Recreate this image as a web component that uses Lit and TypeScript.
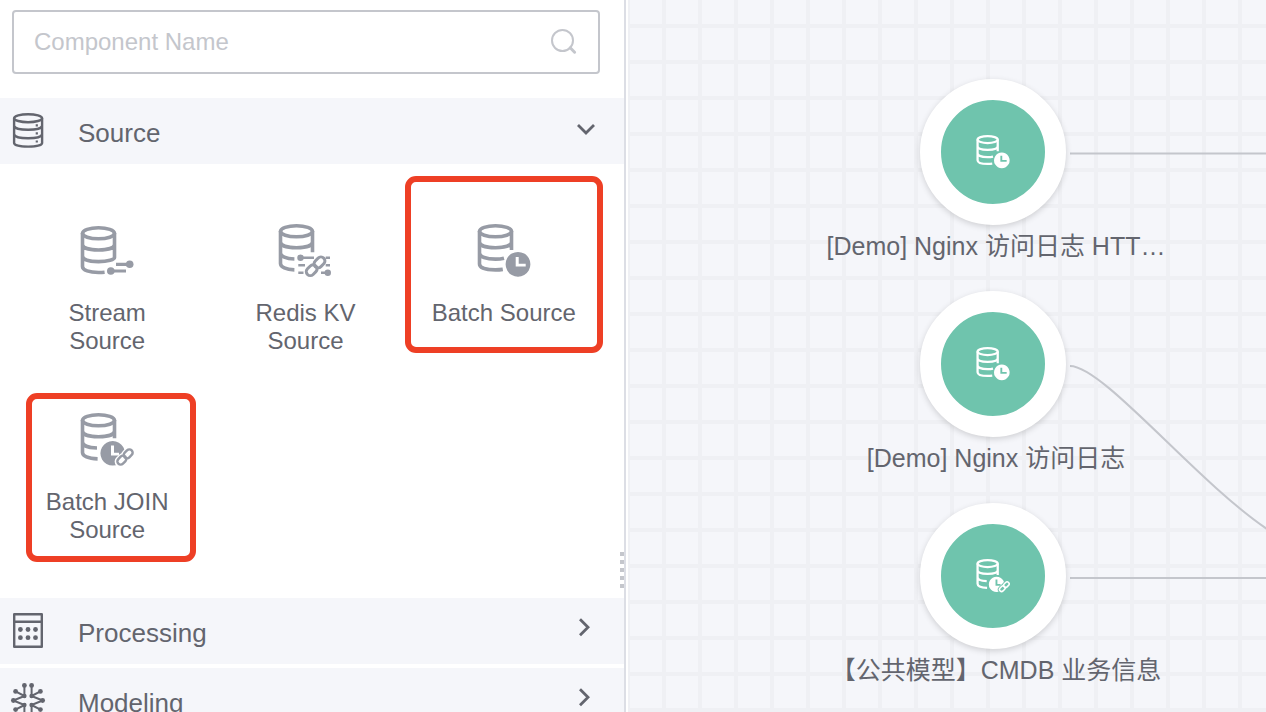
import { LitElement, html, css, svg } from "lit";
import { customElement, property } from "lit/decorators.js";

type Mark = "stream" | "redis" | "batch" | "join";

interface Component {
  name: string;
  mark: Mark;
  frame?: string;
}

interface FlowNode {
  label: string;
  mark: Mark;
  slot: string;
}

const COMPONENTS: Component[] = [
  { name: "Stream Source", mark: "stream" },
  { name: "Redis KV Source", mark: "redis" },
  { name: "Batch Source", mark: "batch", frame: "frame-cell" },
  { name: "Batch JOIN Source", mark: "join", frame: "frame-tight" },
];

const NODES: FlowNode[] = [
  { label: "[Demo] Nginx 访问日志 HTT…", mark: "batch", slot: "n1" },
  { label: "[Demo] Nginx 访问日志", mark: "batch", slot: "n2" },
  { label: "【公共模型】CMDB 业务信息", mark: "join", slot: "n3" },
];

// Two interlocked links, centred on the origin.
const chain = svg`
  <g fill="none" stroke="currentColor" stroke-width="3">
    <rect x="-4" y="-6" width="8" height="12" rx="4" transform="translate(3.9 -3.9) rotate(45)"/>
    <rect x="-4" y="-6" width="8" height="12" rx="4" transform="translate(-3.9 3.9) rotate(45)"/>
  </g>`;

@customElement("db-icon")
export class DbIcon extends LitElement {
  @property() mark: Mark = "batch";

  static styles = css`
    :host { display: block; }
    svg { display: block; width: 100%; height: 100%; }
  `;

  render() {
    return html`<svg viewBox="0 0 54 54" aria-hidden="true">${this.art()}</svg>`;
  }

  private art() {
    switch (this.mark) {
      case "stream":
        return svg`
          <g fill="none" stroke="currentColor" stroke-width="3.6">
            <ellipse cx="18.5" cy="9.3" rx="16" ry="5.5"/>
            <path d="M2.5 9V42.5C2.5 46.3 9.5 48.5 18.5 48.5Q22 48.5 24.6 48.2M34.5 9V33.5C34.5 35.5 28 37.6 18.5 37.6S2.5 35.5 2.5 32M2.5 20.5C2.5 24 9.5 26 18.5 26S34.5 24 34.5 20.5"/>
            <path d="M36 40.3H50M31 47H46" stroke-width="3.2"/>
          </g>
          <circle cx="49.7" cy="40.3" r="3.8" fill="currentColor"/>
          <circle cx="30.8" cy="47" r="3.8" fill="currentColor"/>`;
      case "redis":
        return svg`
          <g fill="none" stroke="currentColor" stroke-width="3.6">
            <ellipse cx="18.5" cy="7.3" rx="16" ry="5.5"/>
            <path d="M2.5 7V39.5C2.5 43 8 45.7 16.4 45.9M34.5 7V28.3M2.5 18C2.5 21.7 9.5 23.7 18.5 23.7S34.5 21.7 34.5 18M2.5 29C2.5 32.3 8 34.8 16.4 35"/>
          </g>
          <g fill="none" stroke="currentColor" stroke-width="2.6">
            <path d="M23 33.7H36M47.7 33.7H52M20.3 41.3H27M47.7 41.3H52M20.3 48.7H25.5M43 48.7H50"/>
          </g>
          <circle cx="22.5" cy="33.7" r="3.2" fill="currentColor"/>
          <circle cx="49.8" cy="48.7" r="3.2" fill="currentColor"/>
          <g transform="translate(37.6 42.3)">${chain}</g>`;
      case "join":
        return svg`
          <mask id="gap">
            <rect width="54" height="54" fill="#fff"/>
            <g transform="translate(45 44)" fill="#000" stroke="#000" stroke-width="5.5">
              <rect x="-3" y="-5" width="6" height="10" rx="3" transform="translate(3.2 -3.2) rotate(45)"/>
              <rect x="-3" y="-5" width="6" height="10" rx="3" transform="translate(-3.2 3.2) rotate(45)"/>
            </g>
          </mask>
          <g fill="none" stroke="currentColor" stroke-width="3.6">
            <ellipse cx="18.5" cy="7.3" rx="16" ry="5.5"/>
            <path d="M2.5 7V39.5C2.5 43 8 45.7 17.6 45.9M34.5 7V25.3M2.5 18C2.5 21.7 9.5 23.7 18.5 23.7S34.5 21.7 34.5 18M2.5 29C2.5 32.3 8 34.8 17 35"/>
          </g>
          <path mask="url(#gap)" fill="currentColor" fill-rule="evenodd" d="M32.7 28a12.3 12.3 0 1 0 .01 0ZM31 32.5H34V39.8H39V42.6H31Z"/>
          <g transform="translate(45 44) scale(.82)">${chain}</g>`;
      default:
        return svg`
          <g fill="none" stroke="currentColor" stroke-width="3.6">
            <ellipse cx="18.5" cy="7.3" rx="16" ry="5.5"/>
            <path d="M2.5 7V40C2.5 43.8 9.5 45.9 18.5 45.9Q22.5 45.9 25.8 45.4M34.5 7V26M2.5 18C2.5 21.7 9.5 23.7 18.5 23.7S34.5 21.7 34.5 18M2.5 29C2.5 32.8 9.5 35.1 18.5 35.1Q23.5 35.1 27 34.2"/>
          </g>
          <path fill="currentColor" fill-rule="evenodd" d="M41 27.9a12.4 12.4 0 1 0 .01 0ZM38.7 33H41.7V39.7H48.7V42.5H38.7Z"/>`;
    }
  }
}

@customElement("app-root")
export class AppRoot extends LitElement {
  static styles = css`
    :host {
      display: flex;
      height: 100vh;
      overflow: hidden;
      background: #fff;
      color: #63656e;
      font-family: "Liberation Sans", "Noto Sans CJK SC", sans-serif;
      font-size: 24px;
      line-height: 28px;
    }
    * { box-sizing: border-box; }
    .panel {
      position: relative;
      flex: 0 0 626px;
      border-right: 2px solid #dcdee5;
      overflow: hidden;
    }
    .search {
      display: flex;
      align-items: center;
      height: 64px;
      margin: 10px 24px 24px 12px;
      padding: 0 20px;
      border: 2px solid #c4c6cc;
      border-radius: 4px;
    }
    .search input {
      flex: 1;
      min-width: 0;
      padding: 0;
      border: 0;
      outline: 0;
      background: none;
      color: inherit;
      font: inherit;
    }
    .search input::placeholder { color: #c4c6cc; opacity: 1; }
    .search svg { width: 28px; height: 28px; color: #c4c6cc; }
    .heading {
      display: flex;
      align-items: center;
      width: 100%;
      height: 66px;
      padding: 0 28px 0 10px;
      border: 0;
      background: #f5f6fa;
      color: inherit;
      font: inherit;
      font-size: 26px;
      text-align: left;
    }
    .heading .glyph { width: 36px; height: 36px; margin-right: 32px; }
    .heading .title { flex: 1; padding-top: 4px; }
    .heading .arrow { width: 24px; height: 24px; margin-bottom: 6px; }
    .heading + .heading { margin-top: 4px; }
    .components {
      display: grid;
      grid-template-columns: repeat(3, 1fr);
      row-gap: 10px;
      padding: 12px 21px 54px 8px;
    }
    .component {
      position: relative;
      display: flex;
      flex-direction: column;
      align-items: center;
      gap: 21px;
      min-height: 179px;
      padding: 48px 20px 0;
      border: 0;
      background: none;
      color: inherit;
      font: inherit;
      text-align: center;
    }
    .component db-icon { width: 54px; height: 54px; color: #979ba5; }
    .frame-cell::after,
    .frame-tight::after {
      content: "";
      position: absolute;
      inset: 0 0 2px;
      border: 6px solid #ee3f25;
      border-radius: 11px;
    }
    .frame-tight::after { inset: 28px 10px -18px 18px; }
    .grip {
      position: absolute;
      right: 0;
      top: 552px;
      width: 4px;
      height: 36px;
      background: repeating-linear-gradient(#c4c6cc 0 4px, transparent 4px 8px);
    }
    .canvas {
      position: relative;
      flex: 1;
      min-width: 0;
      margin-left: 2px;
      overflow: hidden;
      background-color: #f5f6fa;
      background-image:
        linear-gradient(#eff0f4 4px, transparent 4px),
        linear-gradient(90deg, #eff0f4 4px, transparent 4px);
      background-size: 36px 36px;
      background-position: -2px 24px;
    }
    .links { position: absolute; left: 0; top: 0; width: 100%; height: 100%; }
    .node {
      position: absolute;
      left: 165px;
      width: 400px;
      display: flex;
      flex-direction: column;
      align-items: center;
      gap: 7px;
    }
    .n1 { top: 79px; }
    .n2 { top: 291px; }
    .n3 { top: 503px; }
    .disc {
      display: grid;
      place-items: center;
      width: 146px;
      height: 146px;
      border: 21px solid #fff;
      border-radius: 50%;
      background: #6fc4ad;
      color: #fff;
      box-shadow: 0 2px 6px rgba(0, 0, 0, 0.16);
    }
    .disc db-icon { width: 34px; height: 34px; }
    .label {
      padding-left: 6px;
      font-size: 25px;
      white-space: nowrap;
    }
  `;

  private arrow(open: boolean) {
    return html`<svg class="arrow" viewBox="0 0 24 24" fill="none" stroke="currentColor" stroke-width="2.8" aria-hidden="true">
      <path d=${open ? "M6 9L14 17L22 9" : "M8 3.3L16 11.3L8 19.3"} />
    </svg>`;
  }

  render() {
    return html`
      <aside class="panel">
        <label class="search">
          <input type="text" placeholder="Component Name" aria-label="Component Name" />
          <svg viewBox="0 0 28 28" fill="none" stroke="currentColor" aria-hidden="true">
            <circle cx="12.5" cy="12.5" r="10.5" stroke-width="2" />
            <path d="M20.2 19.8L24.6 24.2" stroke-width="3" stroke-linecap="round" />
          </svg>
        </label>
        <button class="heading" aria-expanded="true">
          <svg class="glyph" viewBox="0 0 36 36" fill="none" stroke="currentColor" stroke-width="2.4" aria-hidden="true">
            <ellipse cx="18.1" cy="5.2" rx="14" ry="4" />
            <path d="M4.1 5.2V30C4.1 32 10 33.6 18.1 33.6S32.1 32 32.1 30V5.2M4.1 13C5 15.6 11 16.8 18.1 16.8S31.2 15.6 32.1 13M4.1 21.5C5 24.1 11 25.2 18.1 25.2S31.2 24.1 32.1 21.5" />
            <path d="M25.7 12.3H27.9M25.7 20.4H27.9M25.7 28.5H27.9" stroke-width="2.2" />
          </svg>
          <span class="title">Source</span>
          ${this.arrow(true)}
        </button>
        <div class="components">
          ${COMPONENTS.map(
            (c) => html`<button class="component ${c.frame ?? ""}">
              <db-icon .mark=${c.mark}></db-icon>
              <span>${c.name}</span>
            </button>`
          )}
        </div>
        <button class="heading" aria-expanded="false">
          <svg class="glyph" viewBox="0 0 36 36" fill="none" stroke="currentColor" stroke-width="2.4" stroke-linejoin="round" aria-hidden="true">
            <path d="M4.2 1.3H31.8V33.8H4.2ZM4.2 8.8H31.8" />
            <g fill="currentColor" stroke="none">
              <circle cx="10.4" cy="16.5" r="2.4" /><circle cx="18" cy="16.5" r="2.4" /><circle cx="25.5" cy="16.5" r="2.4" />
              <circle cx="10.4" cy="24.7" r="2.4" /><circle cx="18" cy="24.7" r="2.4" /><circle cx="25.5" cy="24.7" r="2.4" />
            </g>
          </svg>
          <span class="title">Processing</span>
          ${this.arrow(false)}
        </button>
        <button class="heading" aria-expanded="false">
          <svg class="glyph" viewBox="0 0 36 36" fill="none" stroke="currentColor" stroke-width="2" aria-hidden="true">
            <path d="M14.4 2V13L5.6 8.3M21.6 2V13L30.4 8.3M14.4 13L3.3 17.5L14.4 22M21.6 13L32.7 17.5L21.6 22M14.4 33V22L5.6 26.7M21.6 33V22L30.4 26.7" />
            <g fill="currentColor" stroke="none">
              <circle cx="14.4" cy="2.4" r="2.4" /><circle cx="21.6" cy="2.4" r="2.4" />
              <circle cx="5.6" cy="8.4" r="2.4" /><circle cx="30.4" cy="8.4" r="2.4" />
              <circle cx="3.4" cy="17.5" r="2.4" /><circle cx="32.6" cy="17.5" r="2.4" />
              <circle cx="14.4" cy="13" r="2.2" /><circle cx="21.6" cy="13" r="2.2" />
              <circle cx="14.4" cy="22" r="2.2" /><circle cx="21.6" cy="22" r="2.2" />
              <circle cx="5.6" cy="26.6" r="2.4" /><circle cx="30.4" cy="26.6" r="2.4" />
              <circle cx="14.4" cy="32.6" r="2.4" /><circle cx="21.6" cy="32.6" r="2.4" />
            </g>
          </svg>
          <span class="title">Modeling</span>
          ${this.arrow(false)}
        </button>
        <div class="grip"></div>
      </aside>
      <main class="canvas">
        <svg class="links" fill="none" stroke="#c4c6cc" stroke-width="2" aria-hidden="true">
          <path d="M442 153.5H2000" />
          <path d="M442 366C475 366 567 480 638 528.3S760 578 800 578" />
          <path d="M442 578H2000" />
        </svg>
        ${NODES.map(
          (n) => html`<div class="node ${n.slot}">
            <div class="disc"><db-icon .mark=${n.mark}></db-icon></div>
            <div class="label">${n.label}</div>
          </div>`
        )}
      </main>
    `;
  }
}
